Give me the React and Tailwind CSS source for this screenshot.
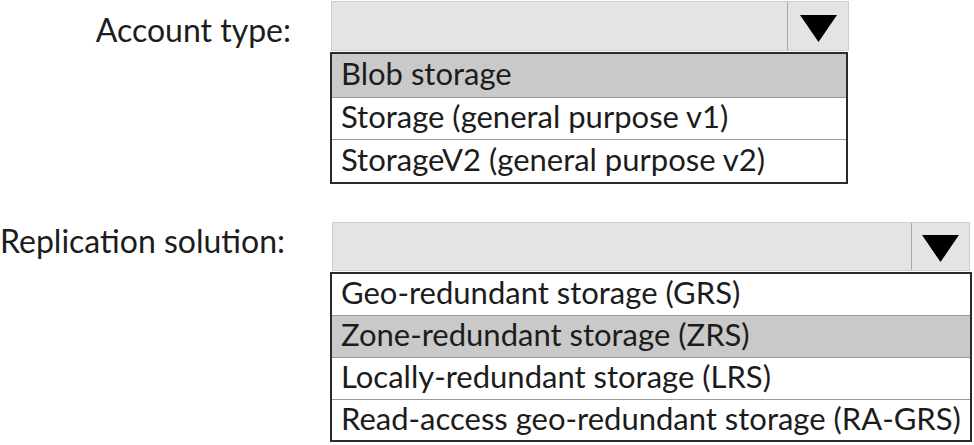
import React from 'react';

const Arrow = () => (
  <svg width="37" height="27" viewBox="0 0 37 27">
    <polygon points="0,0 37,0 18.5,27" fill="#000" />
  </svg>
);

const Dropdown = ({ width, btnWidth, height }) => (
  <div
    className="flex bg-[#e4e4e4] border border-[#cfcfcf]"
    style={{ width, height }}
  >
    <div className="flex-1" />
    <div
      className="flex items-center justify-center border-l border-[#a8a8a8] pt-[4px]"
      style={{ width: btnWidth }}
    >
      <Arrow />
    </div>
  </div>
);

const OptionList = ({ width, options, selected, rowHeights }) => (
  <div className="border-2 border-[#2a2a2a] bg-white text-[31px]" style={{ width }}>
    {options.map((opt, i) => (
      <div
        key={opt}
        className={`flex items-center pl-[9px] pb-[4px] text-[#1c1c1c] whitespace-nowrap ${i > 0 ? 'border-t border-[#9a9a9a]' : ''} ${i === selected ? 'bg-[#c9c9c9]' : ''}`}
        style={{ height: rowHeights[i] }}
      >
        {opt}
      </div>
    ))}
  </div>
);

export default function App() {
  return (
    <div
      className="w-[974px] h-[445px] bg-white overflow-hidden text-[32px] leading-none"
      style={{ fontFamily: 'Lato, "Open Sans", sans-serif' }}
    >
      {/* account type */}
      <div className="flex pt-[1px]">
        <div className="w-[331px] h-[50px] pt-[13px] text-right pr-[40px] text-[#1c1c1c] whitespace-nowrap">
          Account type:
        </div>
        <div className="flex flex-col">
          <Dropdown width={518} btnWidth={61} height={50} />
          <div className="mt-[1px] -ml-[1px]">
            <OptionList
              width={518}
              selected={0}
              rowHeights={[43, 42, 43]}
              options={[
                'Blob storage',
                'Storage (general purpose v1)',
                'StorageV2 (general purpose v2)',
              ]}
            />
          </div>
        </div>
      </div>

      {/* replication */}
      <div className="flex mt-[38px]">
        <div className="w-[332px] h-[49px] pt-[3px] text-right pr-[47px] text-[#1c1c1c] whitespace-nowrap">
          Replication solution:
        </div>
        <div className="flex flex-col">
          <Dropdown width={638} btnWidth={58} height={49} />
          <div className="mt-[1px] -ml-[2px]">
            <OptionList
              width={642}
              selected={1}
              rowHeights={[41, 42, 42, 41]}
              options={[
                'Geo-redundant storage (GRS)',
                'Zone-redundant storage (ZRS)',
                'Locally-redundant storage (LRS)',
                'Read-access geo-redundant storage (RA-GRS)',
              ]}
            />
          </div>
        </div>
      </div>
    </div>
  );
}
